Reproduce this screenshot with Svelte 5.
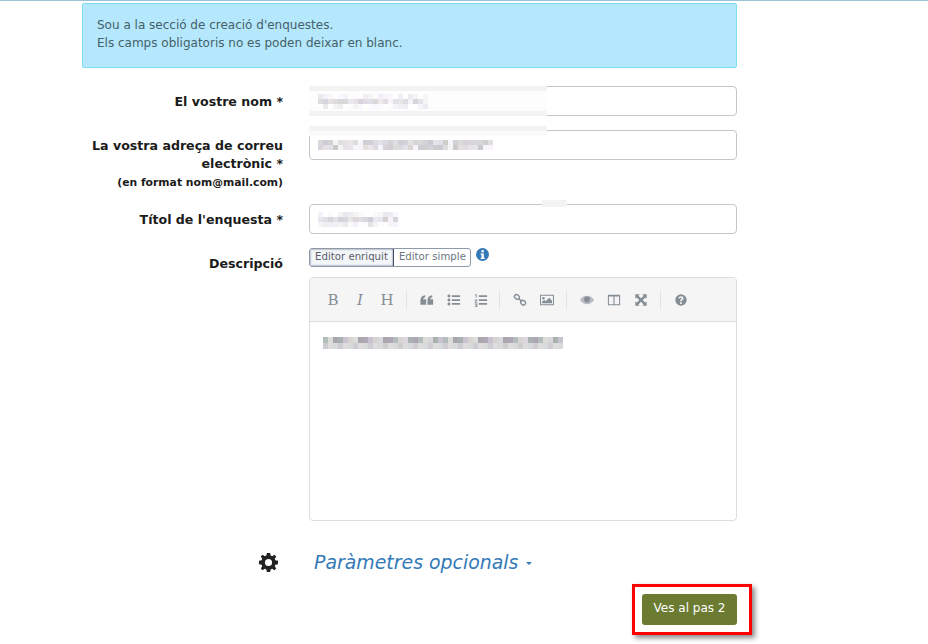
<script>
  // fake mosaic for the redacted values, rows of 5px cells
  function mosaic(count, seed, rows, dark) {
    const out = []
    let n = seed
    for (let r = 0; r < rows; r++) {
      const row = []
      const base = r == 1 || rows == 2 ? dark : dark + 22
      for (let i = 0; i < count; i++) {
        n = (n * 137 + 59) % 251
        const v = n % 7 == 0 ? 244 : base + (n % 30)
        row.push(`rgb(${v + (n % 5)},${v},${v + (n % 4) * 3})`)
      }
      out.push(row)
    }
    return out
  }

  // the description line alternates darker tinted cells and pale ones
  const tints = ['#b3bdbb', '#d9d7dc', '#ada7b6', '#d6d4d2', '#a9a6ad', '#c9c2d0', '#dcdcd8', '#a8b0b0']
  function bodyLine() {
    const top = []
    const bottom = []
    for (let i = 0; i < 48; i++) {
      top.push(tints[(i * 5 + (i % 3)) % tints.length])
      bottom.push(i % 3 == 0 ? '#cfcdd2' : i % 3 == 1 ? '#dedcdc' : '#d6dadb')
    }
    return [top, bottom]
  }

  const nameCells = mosaic(22, 11, 3, 212)
  const mailCells = mosaic(35, 29, 2, 200)
  const titleCells = mosaic(16, 47, 3, 205)
  const bodyCells = bodyLine()
</script>

{#snippet cells(rows)}
  <div class="mosaic">
    {#each rows as row}
      <div class="cell-row">
        {#each row as c}
          <i style="background:{c}"></i>
        {/each}
      </div>
    {/each}
  </div>
{/snippet}

<div class="topline"></div>

<main class="page">
  <div class="alert">
    Sou a la secció de creació d'enquestes.<br />
    Els camps obligatoris no es poden deixar en blanc.
  </div>

  <form class="form">
    <div class="row name-row">
      <label for="nom">El vostre nom *</label>
      <div class="field">
        <div class="input" id="nom">{@render cells(nameCells)}</div>
        <div class="patch patch-name"></div>
      </div>
    </div>

    <div class="row mail-row">
      <label for="mail">
        La vostra adreça de correu electrònic *
        <small>(en format nom@mail.com)</small>
      </label>
      <div class="field">
        <div class="input" id="mail">{@render cells(mailCells)}</div>
        <div class="patch patch-mail"></div>
      </div>
    </div>

    <div class="row title-row">
      <label for="titol">Títol de l'enquesta *</label>
      <div class="field">
        <div class="input" id="titol">{@render cells(titleCells)}</div>
        <div class="patch patch-title"></div>
      </div>
    </div>

    <div class="row desc-row">
      <label for="desc">Descripció</label>
      <div class="field">
        <div class="tabs">
          <div class="tab-group">
            <span class="tab active">Editor enriquit</span>
            <span class="tab">Editor simple</span>
          </div>
          <svg class="info" viewBox="0 0 24 24" width="13" height="13">
            <circle cx="12" cy="12" r="12" fill="#337ab7" />
            <rect x="10" y="4" width="4.4" height="4" fill="#fff" />
            <path d="M8.500 10h6v8h1.600v2.400H8.500V18h1.600v-5.600H8.500z" fill="#fff" />
          </svg>
        </div>

        <div class="editor" id="desc">
          <div class="toolbar">
            <span class="glyph">B</span>
            <span class="glyph it">I</span>
            <span class="glyph">H</span>
            <span class="sep"></span>
            <svg viewBox="0 0 16 16" class="ic"><path d="M.5 8.500C.5 4.800 2.600 2.800 6 2.500v2.300C4.500 5 3.700 5.800 3.700 7H7v6.500H.5zM8.500 8.500C8.500 4.800 10.600 2.800 14 2.500v2.300C12.500 5 11.700 5.800 11.700 7H15v6.500H8.500z" /></svg>
            <svg viewBox="0 0 16 16" class="ic"><circle cx="2.200" cy="3.500" r="1.700" /><circle cx="2.200" cy="8" r="1.700" /><circle cx="2.200" cy="12.500" r="1.700" /><path d="M5.500 2.500H15v2H5.500zM5.500 7H15v2H5.500zM5.500 11.500H15v2H5.500z" /></svg>
            <svg viewBox="0 0 16 16" class="ic"><path d="M1 1.500h2v4H2V2.500H1zM.8 7.500h3v1L2 10.200h2v1H.8v-1L2.700 8.500H.8zM.8 12h3v4h-3v-1h2v-.5h-1v-1h1V13h-2z" /><path d="M5.500 2.500H15v2H5.500zM5.500 7H15v2H5.500zM5.500 11.500H15v2H5.500z" /></svg>
            <span class="sep"></span>
            <svg viewBox="0 0 16 16" class="ic line"><ellipse cx="4.500" cy="4.500" rx="3" ry="2.400" transform="rotate(35 4.500 4.500)" /><ellipse cx="11.500" cy="11" rx="3" ry="2.400" transform="rotate(35 11.500 11)" /><path d="M6 6l4 3.500" /></svg>
            <svg viewBox="0 0 16 16" class="ic"><path fill-rule="evenodd" d="M0 2h16v12H0zM1.200 3.200v9.600h13.600V3.200z" /><circle cx="4" cy="6" r="1.400" /><path d="M2.200 11.800V10l2.600-2 1.800 1.500L10.500 5.500l3.300 3.300v3z" /></svg>
            <span class="sep"></span>
            <svg viewBox="0 0 16 16" class="ic"><path fill-rule="evenodd" opacity=".55" d="M0 8c1.800-3 4.600-4.800 8-4.800S14.200 5 16 8c-1.800 3-4.600 4.800-8 4.800S1.800 11 0 8z" /><circle cx="8" cy="7.300" r="3.300" /></svg>
            <svg viewBox="0 0 16 16" class="ic"><path fill-rule="evenodd" d="M1 2h14v12H1zM2.200 4v8.800h5.200V4zM8.600 4v8.800h5.200V4z" /></svg>
            <svg viewBox="0 0 16 16" class="ic"><path d="M1.500 1.500h5L5 3 8 6 11 3 9.500 1.500h5v5L13 5 10 8l3 3 1.500-1.500v5h-5L11 13 8 10l-3 3 1.500 1.500h-5v-5L3 11l3-3-3-3-1.500 1.500z" /></svg>
            <span class="sep"></span>
            <svg viewBox="0 0 16 16" class="ic"><path fill-rule="evenodd" d="M8 1.500a6.500 6.500 0 1 1 0 13 6.500 6.500 0 0 1 0-13zM7 10.500v2h2v-2zM8 3.600c-1.700 0-2.800.9-3 2.300l1.800.4c.1-.7.500-1 1.100-1 .6 0 1 .3 1 .8 0 .4-.3.7-.8 1-.9.500-1.100 1-1.100 1.900v.3h1.900c0-.6.200-.8.800-1.200.8-.5 1.300-1.100 1.300-2 0-1.500-1.300-2.500-3-2.500z" /></svg>
          </div>
          <div class="editor-body">
            {@render cells(bodyCells)}
          </div>
        </div>
      </div>
    </div>

    <div class="row options-row">
      <div class="gear-wrap">
        <svg viewBox="0 0 16 16" width="19" height="19" class="gear">
          <path fill-rule="evenodd" d="M6.600 0h2.800l.4 2.200 1.300.5L13 1.500 14.500 3l-1.200 1.900.5 1.300 2.200.4v2.800l-2.200.4-.5 1.300 1.200 1.900L13 14.500l-1.900-1.200-1.300.5-.4 2.200H6.600l-.4-2.200-1.300-.5L3 14.500 1.500 13l1.200-1.900-.5-1.300L0 9.400V6.600l2.200-.4.500-1.300L1.500 3 3 1.500l1.900 1.200 1.300-.5zM8 5a3 3 0 1 0 0 6 3 3 0 0 0 0-6z" />
        </svg>
      </div>
      <a class="options" href="#opcions">Paràmetres opcionals <span class="caret"></span></a>
    </div>

    <div class="actions">
      <div class="next-wrap">
        <button type="button" class="next">Ves al pas 2</button>
      </div>
    </div>
  </form>
</main>

<style>
  :global(body) {
    margin: 0;
    background: #fff;
    font-family: "DejaVu Sans", sans-serif;
  }

  .topline {
    height: 1px;
    background: #9cc4d6;
  }

  .page {
    box-sizing: border-box;
    width: 655px;
    height: 643px;
    margin-left: 82px;
    padding-top: 2px;
  }

  .alert {
    box-sizing: border-box;
    height: 65px;
    padding: 12px 14px;
    background: #b5e8fc;
    border: 1px solid #7fdcf2;
    border-radius: 2px;
    color: #44606b;
    font-size: 12px;
    line-height: 18px;
  }

  .row {
    display: grid;
    grid-template-columns: 201px 428px;
    column-gap: 26px;
  }

  label {
    padding-top: 7px;
    text-align: right;
    color: #1b1b1b;
    font-size: 12.6px;
    font-weight: 700;
    line-height: 18px;
  }

  small {
    display: block;
    margin-top: 1px;
    font-size: 10.8px;
  }

  .name-row { margin-top: 18px; }
  .mail-row { margin-top: 14px; }
  .title-row { margin-top: 12px; }
  .desc-row { margin-top: 14px; }

  .field {
    position: relative;
  }

  .input {
    box-sizing: border-box;
    height: 30px;
    padding-left: 8px;
    display: flex;
    align-items: center;
    border: 1px solid #c6c6c6;
    border-radius: 4px;
    background: #fff;
  }

  .mosaic {
    position: relative;
    z-index: 2;
    display: flex;
    flex-direction: column;
  }

  .cell-row {
    display: flex;
  }

  .cell-row i {
    width: 5px;
    height: 5px;
  }

  .editor-body .cell-row i {
    height: 6px;
  }

  .patch {
    position: absolute;
    background: #f3f3f3;
    pointer-events: none;
  }

  .patch-name {
    left: 0;
    top: 0;
    width: 238px;
    height: 30px;
    z-index: 1;
    background: linear-gradient(#f3f3f3 5px, #fdfdfd 5px, #fdfdfd 25px, #f3f3f3 25px);
  }

  .patch-mail {
    left: 0;
    top: -4px;
    width: 238px;
    height: 10px;
    background: linear-gradient(#f3f3f3 5px, #fbfbfb 5px);
  }

  .patch-title {
    left: 233px;
    top: -4px;
    width: 25px;
    height: 7px;
  }

  .tabs {
    display: flex;
    align-items: flex-start;
    gap: 5px;
  }

  .tab-group {
    display: flex;
    height: 19px;
    border: 1px solid #8e9aa8;
    border-radius: 3px;
    overflow: hidden;
    box-sizing: border-box;
  }

  .tab {
    padding: 0 4px 0 5px;
    color: #6d7680;
    font-size: 10.2px;
    line-height: 15px;
    white-space: nowrap;
  }

  .tab.active {
    padding-right: 5px;
    background: #f3f6f8;
    border-right: 1px solid #49516f;
    box-shadow: inset 0 0 2px #49516f;
    color: #5c5c6c;
  }

  .editor {
    box-sizing: border-box;
    height: 244px;
    margin-top: 10px;
    border: 1px solid #ddd;
    border-radius: 4px;
    overflow: hidden;
  }

  .toolbar {
    box-sizing: border-box;
    height: 44px;
    padding-left: 16px;
    display: flex;
    align-items: center;
    gap: 13px;
    background: #f5f5f5;
    border-bottom: 1px solid #ddd;
  }

  .glyph {
    width: 14px;
    text-align: center;
    color: #858d95;
    font-family: "DejaVu Serif", serif;
    font-size: 15px;
  }

  .glyph.it {
    font-style: italic;
  }

  .sep {
    width: 1px;
    height: 18px;
    margin-left: -1.33px;
    background: #e2e2e2;
  }

  .ic {
    width: 14px;
    height: 14px;
    fill: #858d95;
  }

  .ic.line {
    fill: none;
    stroke: #858d95;
    stroke-width: 1.500;
  }

  .editor-body {
    padding: 15px 13px;
  }

  .options-row {
    margin-top: 29px;
    align-items: center;
  }

  .gear-wrap {
    display: flex;
    justify-content: flex-end;
    padding-right: 5px;
  }

  .gear {
    fill: #222;
  }

  .options {
    padding-left: 5px;
    color: #337ab7;
    font-size: 18.9px;
    font-style: italic;
    line-height: 24px;
    text-decoration: none;
  }

  .caret {
    display: inline-block;
    margin-left: 2px;
    vertical-align: middle;
    border-top: 3px solid #337ab7;
    border-left: 3px solid transparent;
    border-right: 3px solid transparent;
  }

  .actions {
    display: flex;
    justify-content: flex-end;
    margin-top: 20px;
  }

  .next-wrap {
    position: relative;
    display: flex;
  }

  /* red annotation frame drawn over the screenshot */
  .next-wrap::after {
    content: "";
    position: absolute;
    inset: -10px -15px -10px -10px;
    border: 3px solid #f00;
    box-shadow: 3px 3px 5px #8a8a8a;
    pointer-events: none;
  }

  .next {
    box-sizing: border-box;
    width: 95px;
    height: 31px;
    padding: 0 0 3px;
    border: none;
    border-radius: 3px;
    background: #6b7b32;
    color: #fff;
    font-family: inherit;
    font-size: 12px;
  }
</style>
